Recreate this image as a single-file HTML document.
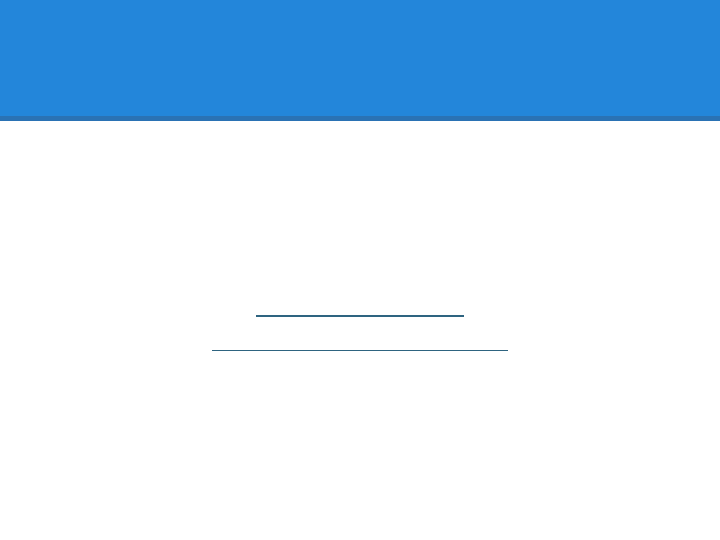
<!DOCTYPE html>
<html><head><style>
html,body{margin:0;padding:0;width:720px;height:540px;background:#fff;overflow:hidden}
.hd{position:absolute;left:0;top:0;width:720px;height:116px;background:#2386da}
.bd{position:absolute;left:0;top:116px;width:720px;height:5px;background:#2a72b4}
.l1{position:absolute;left:256px;top:315px;width:208px;height:2px;background:#2e6480}
.l2{position:absolute;left:212px;top:350px;width:296px;height:1px;background:#2e6480}
</style></head><body>
<div class="hd"></div><div class="bd"></div>
<div class="l1"></div><div class="l2"></div>
</body></html>
